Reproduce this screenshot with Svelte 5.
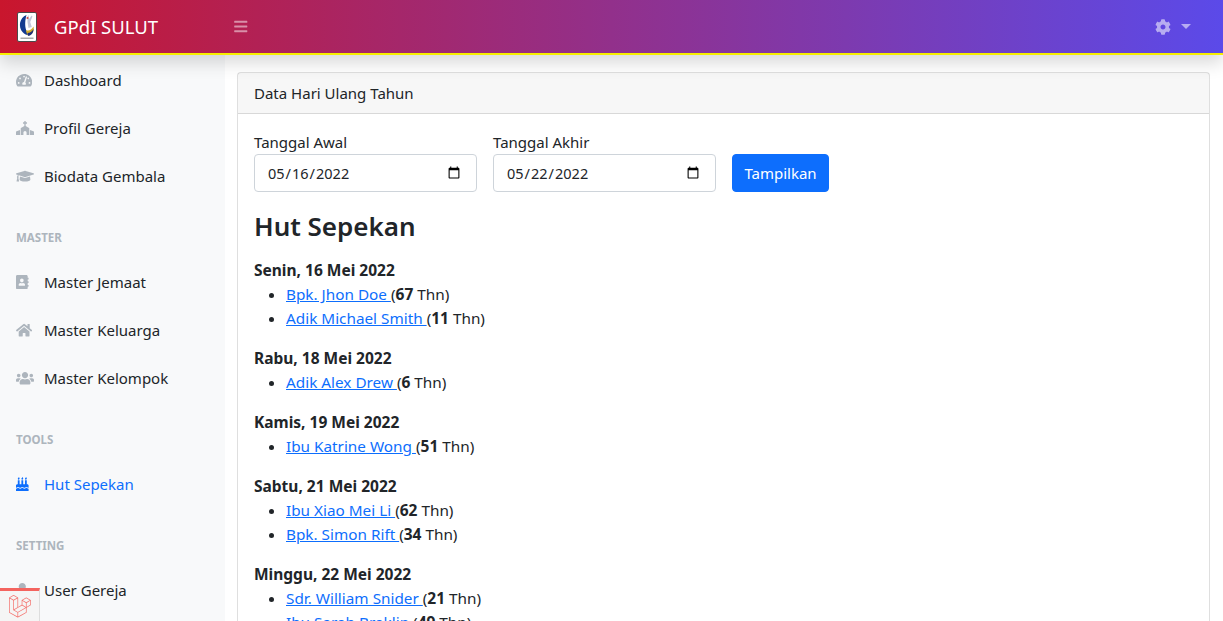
<script>
  const icons = {
    gauge: { w: 576, d: 'M288 32C128.94 32 0 160.94 0 320c0 52.8 14.25 102.26 39.06 144.8 5.61 9.62 16.3 15.2 27.44 15.2h443c11.14 0 21.83-5.58 27.44-15.2C561.75 422.26 576 372.8 576 320c0-159.06-128.94-288-288-288zm0 64c14.71 0 26.58 10.13 30.32 23.65-1.11 2.26-2.64 4.23-3.45 6.67l-9.22 27.67c-5.13 3.49-10.97 6.01-17.64 6.01-17.67 0-32-14.33-32-32S270.33 96 288 96zM96 384c-17.67 0-32-14.33-32-32s14.33-32 32-32 32 14.33 32 32-14.33 32-32 32zm48-160c-17.67 0-32-14.33-32-32s14.33-32 32-32 32 14.33 32 32-14.33 32-32 32zm246.77-72.41l-61.33 184C343.13 347.33 352 364.54 352 384c0 11.72-3.38 22.55-8.88 32H232.88c-5.5-9.45-8.88-20.28-8.88-32 0-33.94 26.5-61.43 59.9-63.59l61.34-184.01c4.17-12.56 17.73-19.45 30.36-15.17 12.57 4.19 19.35 17.79 15.17 30.36zm14.66 57.2l15.52-46.55c3.47-1.29 7.13-2.23 11.05-2.23 17.67 0 32 14.33 32 32s-14.33 32-32 32c-11.38-.01-20.89-6.28-26.57-15.22zM480 384c-17.67 0-32-14.33-32-32s14.33-32 32-32 32 14.33 32 32-14.33 32-32 32z' },
    church: { w: 640, d: 'M464.46 246.68L344 174.4V96h40c4.42 0 8-3.58 8-8V56c0-4.42-3.58-8-8-8h-40V8c0-4.42-3.58-8-8-8h-32c-4.42 0-8 3.58-8 8v40h-40c-4.42 0-8 3.58-8 8v32c0 4.42 3.58 8 8 8h40v78.4l-120.46 72.28A16.01 16.01 0 0 0 168 260.4V512h96v-96c0-35.35 25-64 56-64s56 28.65 56 64v96h96V260.4c0-5.63-2.97-10.83-7.54-13.72zM0 395.96V496c0 8.84 7.16 16 16 16h128V320L19.39 366.54A32.024 32.024 0 0 0 0 395.96zm620.61-29.42L496 320v192h128c8.84 0 16-7.16 16-16V395.96c0-12.8-7.63-24.37-19.39-29.42z' },
    cap: { w: 640, d: 'M622.34 153.2L343.4 67.5c-15.2-4.67-31.6-4.67-46.79 0L17.66 153.2c-23.54 7.23-23.54 38.36 0 45.59l48.63 14.94c-10.67 13.19-17.23 29.28-17.88 46.9C38.78 266.15 32 276.11 32 288c0 10.78 5.68 19.85 13.86 25.65L20.33 428.53C18.11 438.52 25.71 448 35.94 448h56.11c10.24 0 17.84-9.48 15.62-19.47L82.14 313.65C90.32 307.85 96 298.78 96 288c0-11.57-6.47-21.25-15.66-26.87.76-15.02 8.44-28.3 20.69-36.72L296.6 284.5c9.06 2.78 26.44 6.25 46.79 0l278.95-85.7c23.55-7.24 23.55-38.36 0-45.6zM352.79 315.09c-28.53 8.76-52.84 3.92-65.59 0l-145.02-44.55L128 384c0 35.35 85.96 64 192 64s192-28.65 192-64l-14.18-113.47-145.03 44.56z' },
    book: { w: 448, d: 'M436 160c6.6 0 12-5.4 12-12v-40c0-6.6-5.4-12-12-12h-20V48c0-26.5-21.5-48-48-48H48C21.5 0 0 21.5 0 48v416c0 26.5 21.5 48 48 48h320c26.5 0 48-21.5 48-48v-48h20c6.6 0 12-5.4 12-12v-40c0-6.6-5.4-12-12-12h-20v-64h20c6.6 0 12-5.4 12-12v-40c0-6.6-5.4-12-12-12h-20v-64h20zm-228-32c35.3 0 64 28.7 64 64s-28.7 64-64 64-64-28.7-64-64 28.7-64 64-64zm112 236.8c0 10.6-10 19.2-22.4 19.2H118.4C106 384 96 375.4 96 364.8v-19.2c0-31.8 30.1-57.6 67.2-57.6h5c12.3 5.1 25.7 8 39.8 8s27.6-2.9 39.8-8h5c37.1 0 67.2 25.8 67.2 57.6v19.2z' },
    home: { w: 576, d: 'M280.37 148.26L96 300.11V464a16 16 0 0 0 16 16l112.06-.29a16 16 0 0 0 15.92-16V368a16 16 0 0 1 16-16h64a16 16 0 0 1 16 16v95.64a16 16 0 0 0 16 16.05L464 480a16 16 0 0 0 16-16V300L295.67 148.26a12.19 12.19 0 0 0-15.3 0zM571.6 251.47L488 182.56V44.05a12 12 0 0 0-12-12h-56a12 12 0 0 0-12 12v72.61L318.47 43a48 48 0 0 0-61 0L4.34 251.47a12 12 0 0 0-1.6 16.9l25.5 31A12 12 0 0 0 45.15 301l235.22-193.74a12.19 12.19 0 0 1 15.3 0L530.9 301a12 12 0 0 0 16.9-1.6l25.5-31a12 12 0 0 0-1.7-16.93z' },
    users: { w: 640, d: 'M96 224c35.3 0 64-28.7 64-64s-28.7-64-64-64-64 28.7-64 64 28.7 64 64 64zm448 0c35.3 0 64-28.7 64-64s-28.7-64-64-64-64 28.7-64 64 28.7 64 64 64zm32 32h-64c-17.6 0-33.5 7.1-45.1 18.6 40.3 22.1 68.9 62 75.1 109.4h66c17.7 0 32-14.3 32-32v-32c0-35.3-28.7-64-64-64zm-256 0c61.9 0 112-50.1 112-112S381.9 32 320 32 208 82.1 208 144s50.1 112 112 112zm76.8 32h-8.3c-20.8 10-43.9 16-68.5 16s-47.6-6-68.5-16h-8.3C179.6 288 128 339.6 128 403.2V432c0 26.5 21.5 48 48 48h288c26.5 0 48-21.5 48-48v-28.8c0-63.6-51.6-115.2-115.2-115.2zm-223.7-13.4C161.5 263.1 145.6 256 128 256H64c-35.3 0-64 28.7-64 64v32c0 17.7 14.3 32 32 32h65.9c6.3-47.4 34.9-87.3 75.2-109.4z' },
    cake: { w: 448, d: 'M448 384c-28.02 0-31.26-32-74.5-32-43.43 0-46.825 32-74.75 32-27.695 0-31.454-32-74.75-32-42.842 0-47.218 32-74.5 32-28.148 0-31.202-32-74.75-32-43.547 0-46.653 32-74.75 32v-80c0-26.5 21.5-48 48-48h16V112h64v144h64V112h64v144h64V112h64v144h16c26.5 0 48 21.5 48 48v80zm0 128H0v-96c43.356 0 46.767-32 74.75-32 27.951 0 31.253 32 74.75 32 42.843 0 47.217-32 74.5-32 28.148 0 31.201 32 74.75 32 43.357 0 46.767-32 74.75-32 27.488 0 31.252 32 74.5 32v96zM96 96c-17.75 0-32-14.25-32-32 0-31 32-23 32-64 12 0 32 29.5 32 56s-14.25 40-32 40zm128 0c-17.75 0-32-14.25-32-32 0-31 32-23 32-64 12 0 32 29.5 32 56s-14.25 40-32 40zm128 0c-17.75 0-32-14.25-32-32 0-31 32-23 32-64 12 0 32 29.5 32 56s-14.25 40-32 40z' },
    user: { w: 448, d: 'M224 256c70.7 0 128-57.3 128-128S294.7 0 224 0 96 57.3 96 128s57.3 128 128 128zm89.6 32h-16.7c-22.2 10.2-46.9 16-72.9 16s-50.6-5.8-72.9-16h-16.7C60.2 288 0 348.2 0 422.4V464c0 26.5 21.5 48 48 48h352c26.5 0 48-21.5 48-48v-41.6c0-74.2-60.2-134.4-134.4-134.4z' }
  };
  const nav = [
    { items: [{ t: 'Dashboard', i: 'gauge' }, { t: 'Profil Gereja', i: 'church' }, { t: 'Biodata Gembala', i: 'cap' }] },
    { head: 'MASTER', items: [{ t: 'Master Jemaat', i: 'book' }, { t: 'Master Keluarga', i: 'home' }, { t: 'Master Kelompok', i: 'users' }] },
    { head: 'TOOLS', items: [{ t: 'Hut Sepekan', i: 'cake', active: true }] },
    { head: 'SETTING', items: [{ t: 'User Gereja', i: 'user' }] }
  ];
  const days = [
    { d: 'Senin, 16 Mei 2022', p: [['Bpk. Jhon Doe', 67], ['Adik Michael Smith', 11]] },
    { d: 'Rabu, 18 Mei 2022', p: [['Adik Alex Drew', 6]] },
    { d: 'Kamis, 19 Mei 2022', p: [['Ibu Katrine Wong', 51]] },
    { d: 'Sabtu, 21 Mei 2022', p: [['Ibu Xiao Mei Li', 62], ['Bpk. Simon Rift', 34]] },
    { d: 'Minggu, 22 Mei 2022', p: [['Sdr. William Snider', 21], ['Ibu Sarah Braklin', 49]] }
  ];
</script>

<div class="page">
  <header class="topbar">
    <div class="brand">
      <svg class="logo" viewBox="0 0 20 30" aria-hidden="true">
        <rect x="0.5" y="0.5" width="19" height="29" rx="1.500" fill="#fff" stroke="#4a4a4a" />
        <path d="M9.500 3 C2.500 5.500 1 15 5.500 20 C8 22.800 11 23.500 13 23 C9.500 21 8 16 8.200 11 C8.400 8 8.800 5 9.500 3 Z" fill="#123a8f" />
        <path d="M10.500 4.500 L11.500 3 L12.200 7 L14.500 3.500 L15.500 4.500 L13.200 10 L14.800 15 L11.500 16 L10.500 10 Z" fill="#c3c6d8" />
        <circle cx="10.500" cy="6" r="1" fill="#d0453f" />
        <path d="M9 18 C11.500 19.500 14.500 18 16.500 14.500 C17.500 19 15.500 23 11 23.500 C9.800 22 9.200 20 9 18 Z" fill="#d0aa2a" />
        <path d="M10.500 21 C13 21 15 19.500 16.500 17 C16.500 20.500 14.500 23.800 11 23.800 Z" fill="#1c2f78" />
        <rect x="3.500" y="25.500" width="13" height="1.500" fill="#a8a8a8" />
      </svg>
      <span class="brand-name">GPdI SULUT</span>
    </div>
    <svg class="bars" viewBox="0 0 448 512" aria-hidden="true"><path d="M16 132h416c8.837 0 16-7.163 16-16V76c0-8.837-7.163-16-16-16H16C7.163 60 0 67.163 0 76v40c0 8.837 7.163 16 16 16zm0 160h416c8.837 0 16-7.163 16-16v-40c0-8.837-7.163-16-16-16H16c-8.837 0-16 7.163-16 16v40c0 8.837 7.163 16 16 16zm0 160h416c8.837 0 16-7.163 16-16v-40c0-8.837-7.163-16-16-16H16c-8.837 0-16 7.163-16 16v40c0 8.837 7.163 16 16 16z" /></svg>
    <div class="settings">
      <svg class="cog" viewBox="0 0 512 512" aria-hidden="true"><path d="M487.4 315.7l-42.6-24.6c4.3-23.2 4.3-47 0-70.2l42.6-24.6c4.9-2.8 7.1-8.6 5.5-14-11.1-35.6-30-67.8-54.7-94.6-3.8-4.1-10-5.1-14.8-2.3L380.8 110c-17.9-15.4-38.5-27.3-60.8-35.1V25.8c0-5.6-3.9-10.5-9.4-11.7-36.7-8.2-74.3-7.8-109.2 0-5.5 1.2-9.4 6.1-9.4 11.7V75c-22.2 7.9-42.8 19.8-60.8 35.1L88.7 85.5c-4.9-2.8-11-1.9-14.8 2.3-24.7 26.7-43.6 58.9-54.7 94.6-1.7 5.4.6 11.2 5.5 14L67.3 221c-4.3 23.2-4.3 47 0 70.2l-42.6 24.6c-4.9 2.8-7.1 8.6-5.5 14 11.1 35.6 30 67.8 54.7 94.6 3.8 4.1 10 5.1 14.8 2.3l42.6-24.6c17.9 15.4 38.5 27.3 60.8 35.1v49.2c0 5.6 3.9 10.5 9.4 11.7 36.7 8.2 74.3 7.8 109.2 0 5.5-1.2 9.4-6.1 9.4-11.7v-49.2c22.2-7.9 42.8-19.8 60.8-35.1l42.6 24.6c4.9 2.8 11 1.9 14.8-2.3 24.7-26.7 43.6-58.9 54.7-94.6 1.5-5.5-.7-11.3-5.6-14.1zM256 336c-44.1 0-80-35.9-80-80s35.9-80 80-80 80 35.9 80 80-35.9 80-80 80z" /></svg>
      <span class="caret"></span>
    </div>
  </header>

  <div class="body">
    <aside class="sidebar">
      {#each nav as group}
        {#if group.head}<div class="nav-head">{group.head}</div>{/if}
        {#each group.items as item}
          <div class="nav-item" class:active={item.active}>
            <span class="nav-icon">
              <svg viewBox="0 0 {icons[item.i].w} 512" style="width:{(icons[item.i].w / 512) * 14.4}px" aria-hidden="true"><path d={icons[item.i].d} /></svg>
            </span>
            <span>{item.t}</span>
          </div>
        {/each}
      {/each}
    </aside>

    <main class="main">
      <section class="card">
        <div class="card-head">Data Hari Ulang Tahun</div>
        <div class="card-body">
          <form class="filter">
            <label class="field">
              <span>Tanggal Awal</span>
              <input type="date" value="2022-05-16" />
            </label>
            <label class="field">
              <span>Tanggal Akhir</span>
              <input type="date" value="2022-05-22" />
            </label>
            <button type="button" class="btn">Tampilkan</button>
          </form>
          <h3>Hut Sepekan</h3>
          {#each days as day}
            <div class="day">
              <strong>{day.d}</strong>
              <ul>
                {#each day.p as person}
                  <li><a href="#top">{person[0] + ' '}</a>(<strong>{person[1]}</strong> Thn)</li>
                {/each}
              </ul>
            </div>
          {/each}
        </div>
      </section>
    </main>
  </div>

  <div class="debugbar">
    <svg viewBox="0 0 50 52" aria-hidden="true"><path d="M49.626 11.564a.809.809 0 0 1 .028.209v10.972a.8.8 0 0 1-.402.694l-9.209 5.302V39.25c0 .286-.152.55-.4.694L20.42 51.01c-.044.025-.092.041-.14.058-.018.006-.035.017-.054.022a.805.805 0 0 1-.41 0c-.022-.006-.042-.018-.063-.026-.044-.016-.09-.03-.132-.054L.402 39.944A.801.801 0 0 1 0 39.25V6.334c0-.072.01-.142.028-.21.006-.023.02-.044.028-.067.015-.042.029-.085.051-.124.015-.026.037-.047.055-.071.023-.032.044-.065.071-.093.023-.023.053-.04.079-.06.029-.024.055-.05.088-.069h.001l9.61-5.533a.802.802 0 0 1 .8 0l9.61 5.533h.002c.032.02.059.045.088.068.026.02.055.038.078.06.028.029.048.062.072.094.017.024.04.045.054.071.023.04.036.082.052.124.008.023.022.044.028.068a.809.809 0 0 1 .028.209v20.559l8.008-4.611v-10.51c0-.07.01-.141.028-.208.007-.024.02-.045.028-.068.016-.042.03-.085.052-.124.015-.026.037-.047.054-.071.024-.032.044-.065.072-.093.023-.023.052-.04.078-.06.03-.024.056-.05.088-.069h.001l9.611-5.533a.801.801 0 0 1 .8 0l9.61 5.533c.034.02.06.045.09.068.025.02.054.038.077.06.028.029.048.062.072.094.018.024.04.045.054.071.023.039.036.082.052.124.009.023.022.044.028.068zm-1.574 10.718v-9.124l-3.363 1.936-4.646 2.675v9.124l8.01-4.611zm-9.61 16.505v-9.13l-4.57 2.61-13.05 7.448v9.216l17.62-10.144zM1.602 7.719v31.068L19.22 48.93v-9.214l-9.204-5.209-.003-.002-.004-.002c-.031-.018-.057-.044-.086-.066-.025-.02-.054-.036-.076-.058l-.002-.003c-.026-.025-.044-.056-.066-.084-.02-.027-.044-.05-.06-.078l-.001-.003c-.018-.03-.029-.066-.042-.1-.013-.03-.03-.058-.038-.09v-.001c-.01-.038-.012-.078-.016-.117-.004-.03-.012-.06-.012-.09v-.002-21.481L4.965 9.654 1.602 7.72zm8.81-5.994L2.405 6.334l8.005 4.609 8.006-4.61-8.006-4.608zm4.164 28.764l4.645-2.674V7.719l-3.363 1.936-4.646 2.675v20.096l3.364-1.937zM39.243 7.164l-8.006 4.609 8.006 4.609 8.005-4.61-8.005-4.608zm-.801 10.605l-4.646-2.675-3.363-1.936v9.124l4.645 2.674 3.364 1.937v-9.124zM20.02 38.33l11.743-6.704 5.87-3.35-8-4.606-9.211 5.303-8.395 4.833 7.993 4.524z" /></svg>
  </div>
</div>

<style>
  :global(body) {
    margin: 0;
    background: #fff;
  }
  .page {
    position: relative;
    height: 621px;
    overflow: hidden;
    display: flex;
    flex-direction: column;
    font-family: "Noto Sans", "Open Sans", sans-serif;
    font-size: 15px;
    line-height: 24px;
    color: #212529;
  }
  .topbar {
    flex: none;
    position: relative;
    z-index: 2;
    box-sizing: border-box;
    height: 55px;
    display: flex;
    align-items: center;
    background: linear-gradient(90deg, #c9162d, #5b4ae9);
    border-bottom: 2px solid #f6ee00;
    box-shadow: 0 8px 16px rgba(0, 0, 0, 0.15);
    color: #fff;
  }
  .brand {
    width: 234px;
    flex: none;
    display: flex;
    align-items: center;
    box-sizing: border-box;
    padding-left: 17px;
  }
  .logo {
    width: 20px;
    height: 30px;
    margin-right: 17px;
  }
  .brand-name {
    font-size: 18.500px;
  }
  .bars {
    width: 13.500px;
    height: 15px;
    fill: rgba(255, 255, 255, 0.5);
  }
  .settings {
    margin-left: auto;
    display: flex;
    align-items: center;
    padding-right: 32px;
  }
  .cog {
    width: 16px;
    height: 16px;
    fill: rgba(255, 255, 255, 0.55);
  }
  .caret {
    margin-left: 10px;
    margin-top: -1px;
    border-top: 5px solid rgba(255, 255, 255, 0.55);
    border-left: 5px solid transparent;
    border-right: 5px solid transparent;
  }
  .body {
    flex: 1;
    min-height: 0;
    display: flex;
  }
  .sidebar {
    flex: none;
    width: 225px;
    padding-top: 1px;
    background: #f8f9fa;
    color: #212529;
  }
  .nav-item {
    height: 48px;
    display: flex;
    align-items: center;
    padding-left: 16px;
  }
  .nav-item.active {
    color: #0d6efd;
  }
  .nav-icon {
    width: 28px;
    flex: none;
    display: flex;
  }
  .nav-icon svg {
    height: 14.400px;
    fill: #adb5bd;
  }
  .nav-item.active .nav-icon svg {
    fill: #0d6efd;
  }
  .nav-head {
    box-sizing: border-box;
    height: 58px;
    padding: 29px 16px 0;
    font-size: 11.500px;
    line-height: 18px;
    font-weight: 700;
    color: #adb5bd;
  }
  .main {
    flex: 1;
    min-width: 0;
    padding: 17px 13px 0 12px;
  }
  .card {
    border: 1px solid rgba(0, 0, 0, 0.125);
    border-radius: 4px;
    background: #fff;
  }
  .card-head {
    padding: 8px 16px;
    height: 24px;
    background: rgba(0, 0, 0, 0.03);
    border-bottom: 1px solid rgba(0, 0, 0, 0.125);
  }
  .card-body {
    padding: 16px;
  }
  .filter {
    display: flex;
    align-items: flex-end;
    gap: 16px;
    margin-bottom: 17px;
  }
  .field {
    display: flex;
    flex-direction: column;
  }
  input {
    box-sizing: border-box;
    width: 223px;
    height: 38px;
    padding: 6px 13px 6px 12px;
    border: 1px solid #ced4da;
    border-radius: 4px;
    background: #fff;
    color: #212529;
    font: inherit;
    font-size: 14.500px;
  }
  .btn {
    box-sizing: border-box;
    width: 97px;
    height: 38px;
    border: 1px solid #0d6efd;
    border-radius: 4px;
    background: #0d6efd;
    color: #fff;
    font: inherit;
    padding: 0;
  }
  h3 {
    margin: 0 0 15px;
    font-size: 26px;
    line-height: 34px;
    font-weight: 600;
  }
  .day {
    margin-bottom: 16px;
  }
  .day strong {
    font-weight: 700;
    font-size: 15.500px;
  }
  ul {
    margin: 0;
    padding-left: 32px;
    font-size: 15.300px;
  }
  a {
    color: #0d6efd;
    text-decoration: underline;
  }
  .debugbar {
    position: absolute;
    left: 0;
    bottom: 0;
    z-index: 3;
    box-sizing: border-box;
    width: 40px;
    height: 33px;
    display: flex;
    align-items: center;
    justify-content: center;
    background: #f5f5f5;
    border-top: 3px solid #f4645f;
    border-right: 1px solid #ddd;
  }
  .debugbar svg {
    width: 22px;
    height: 23px;
    fill: #f4645f;
    opacity: 0.9;
  }
</style>
